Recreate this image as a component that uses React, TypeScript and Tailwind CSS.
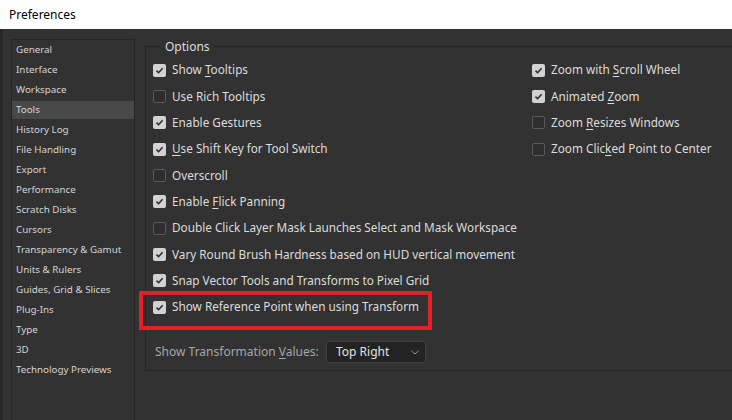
import React from "react";

const sidebarItems = [
  "General",
  "Interface",
  "Workspace",
  "Tools",
  "History Log",
  "File Handling",
  "Export",
  "Performance",
  "Scratch Disks",
  "Cursors",
  "Transparency & Gamut",
  "Units & Rulers",
  "Guides, Grid & Slices",
  "Plug-Ins",
  "Type",
  "3D",
  "Technology Previews",
];

type Opt = { pre: string; u?: string; post?: string; checked: boolean; boxed?: boolean };

const leftOpts: Opt[] = [
  { pre: "Show ", u: "T", post: "ooltips", checked: true },
  { pre: "Use Rich Tooltips", checked: false },
  { pre: "Enable Gestures", checked: true },
  { pre: "", u: "U", post: "se Shift Key for Tool Switch", checked: true },
  { pre: "Overscroll", checked: false },
  { pre: "Enable ", u: "F", post: "lick Panning", checked: true },
  { pre: "Double Click Layer Mask Launches Select and Mask Workspace", checked: false },
  { pre: "Vary Round Brush Hardness based on HUD vertical movement", checked: true },
  { pre: "Snap Vector Tools and Transforms to Pixel Grid", checked: true },
  { pre: "Show Reference Point when using Transform", checked: true, boxed: true },
];

const rightOpts: Opt[] = [
  { pre: "Zoom with ", u: "S", post: "croll Wheel", checked: true },
  { pre: "Animated ", u: "Z", post: "oom", checked: true },
  { pre: "Zoom ", u: "R", post: "esizes Windows", checked: false },
  { pre: "Zoom Clic", u: "k", post: "ed Point to Center", checked: false },
];

function Check({ checked }: { checked: boolean }) {
  return checked ? (
    <span className="w-[13px] h-[13px] rounded-[2px] bg-[#d2d2d2] flex items-center justify-center shrink-0">
      <svg width="9" height="9" viewBox="0 0 9 9">
        <path d="M1.5 4.6 L3.6 6.7 L7.6 2.2" fill="none" stroke="#2e2e2e" strokeWidth="1.6" />
      </svg>
    </span>
  ) : (
    <span className="w-[13px] h-[13px] rounded-[2px] border border-[#5a5a5a] bg-[#2e2e2e] shrink-0" />
  );
}

function Row({ o }: { o: Opt }) {
  return (
    <div className="relative h-[26.33px] flex items-center gap-[6px]">
      <Check checked={o.checked} />
      <span className="whitespace-nowrap text-[11.75px] text-[#dcdcdc]">
        {o.pre}
        {o.u && <span className="underline underline-offset-[2px]">{o.u}</span>}
        {o.post}
      </span>
      {o.boxed && (
        <span className="absolute left-[-14px] top-[-3px] w-[293px] h-[39px] border-[4px] border-[#e3202a] pointer-events-none" />
      )}
    </div>
  );
}

export default function App() {
  return (
    <div className="w-[732px] h-[420px] bg-[#323232] flex flex-col overflow-hidden font-['Noto_Sans',sans-serif]">
      <div className="h-[29px] bg-white flex items-center pl-[9px] text-[12px] text-black shrink-0">
        Preferences
      </div>
      <div className="flex flex-1 min-h-0">
        <div className="w-[3px] bg-[#2a2824] shrink-0" />
        <div className="ml-[8px] mt-[10px] w-[124px] border border-b-0 border-[#262626] shrink-0 pt-[1px]">
          {sidebarItems.map((s) => (
            <div
              key={s}
              className={`h-[18px] mb-[2px] pl-[4px] flex items-center text-[9.8px] text-[#d4d4d4] whitespace-nowrap ${
                s === "Tools" ? "bg-[#484848]" : ""
              }`}
            >
              {s}
            </div>
          ))}
        </div>
        <fieldset className="ml-[10px] mt-[9px] h-[333px] flex-1 border-l border-t border-b border-[#262626] pl-[7px] min-w-0">
          <legend className="ml-[8px] px-[4px] text-[12px] leading-[17px] text-[#dcdcdc]">Options</legend>
          <div className="flex pt-[2px]">
            <div className="w-[379px] shrink-0">
              {leftOpts.map((o, i) => (
                <Row key={i} o={o} />
              ))}
            </div>
            <div>
              {rightOpts.map((o, i) => (
                <Row key={i} o={o} />
              ))}
            </div>
          </div>
          <div className="mt-[21px] flex items-center pl-[2px]">
            <span className="text-[12px] text-[#a6a6a6] whitespace-nowrap w-[171px]">
              Show Transformation <span className="underline underline-offset-[2px]">V</span>alues:
            </span>
            <div className="w-[100px] h-[22px] rounded-[3px] bg-[#232323] border border-[#414141] flex items-center pl-[9px] pr-[6px] justify-between">
              <span className="text-[12px] text-[#e2e2e2]">Top Right</span>
              <svg width="8" height="5" viewBox="0 0 8 5">
                <path d="M0.5 0.8 L4 4 L7.5 0.8" fill="none" stroke="#9a9a9a" strokeWidth="1" />
              </svg>
            </div>
          </div>
        </fieldset>
      </div>
    </div>
  );
}
